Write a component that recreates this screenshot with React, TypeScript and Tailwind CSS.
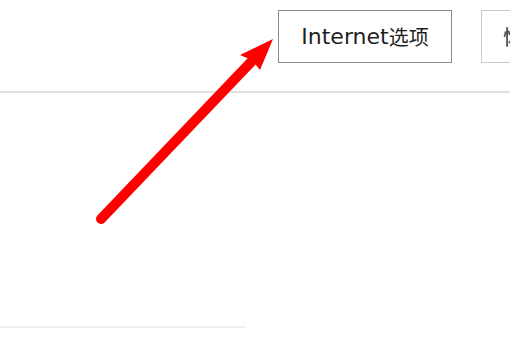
export default function App() {
  return (
    <div className="relative h-[340px] w-[510px] overflow-hidden bg-white">
      <div className="flex h-[93px] items-start gap-[29px] overflow-hidden border-b-2 border-[#e1e1e1] pl-[278px] pt-[10px]">
        <button className="flex h-[53px] w-[174px] shrink-0 items-center justify-center border border-[#8c8c8c] bg-white text-[#1e1e1e]">
          <span className="font-['DejaVu_Sans',sans-serif] text-[22px] leading-none">Internet</span>
          <span className="font-['Noto_Sans_CJK_SC',sans-serif] text-[20px] leading-none">选项</span>
        </button>
        <button className="flex h-[53px] w-[174px] shrink-0 items-center border border-[#c9c9c9] bg-white pl-[21px] font-['Noto_Sans_CJK_SC',sans-serif] text-[20px] leading-none text-[#1e1e1e]">
          恢复默认
        </button>
      </div>
      <div className="mt-[233px] h-[2px] w-[245px] bg-[#eeeeee]" />
      <svg className="absolute left-0 top-0" width="510" height="340" viewBox="0 0 510 340">
        <line x1="101" y1="219" x2="252" y2="61" stroke="#ff0000" strokeWidth="10" strokeLinecap="round" />
        <polygon points="273,39 240,55 252,60 260,70" fill="#ff0000" />
      </svg>
    </div>
  );
}
